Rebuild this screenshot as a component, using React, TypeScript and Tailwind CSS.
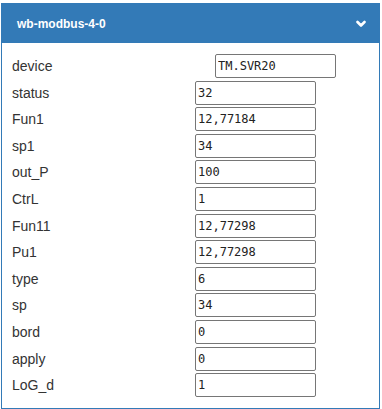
import { ChangeEvent, useState } from "react";

const initialRows: { name: string; value: string }[] = [
  { name: "device", value: "TM.SVR20" },
  { name: "status", value: "32" },
  { name: "Fun1", value: "12,77184" },
  { name: "sp1", value: "34" },
  { name: "out_P", value: "100" },
  { name: "CtrL", value: "1" },
  { name: "Fun11", value: "12,77298" },
  { name: "Pu1", value: "12,77298" },
  { name: "type", value: "6" },
  { name: "sp", value: "34" },
  { name: "bord", value: "0" },
  { name: "apply", value: "0" },
  { name: "LoG_d", value: "1" }
];

function Chevron() {
  return (
    <svg width="10" height="8" viewBox="0 0 10 8" className="text-white">
      <polyline points="1.5,2 5,5.5 8.5,2" fill="none" stroke="currentColor" strokeWidth="2.6" strokeLinecap="round"
                strokeLinejoin="round" />
    </svg>
  );
}

export default function App() {
  const [rows, setRows] = useState(initialRows);

  const onChange = (i: number) => (e: ChangeEvent<HTMLInputElement>) => {
    const next = rows.slice();
    next[i] = { ...next[i], value: e.target.value };
    setRows(next);
  };

  return (
    <div className="bg-white w-[382px] h-[409px] pt-[3px] pl-px font-['Liberation_Sans',Arial,sans-serif]">
      <div className="w-[379px] border border-[#337ab7] bg-white">
        <div className="h-[39px] bg-[#337ab7] flex items-center justify-between pl-[15px] pr-[13px]">
          <span className="text-white text-[12px] font-bold">wb-modbus-4-0</span>
          <Chevron />
        </div>
        <div className="pl-[10px] pt-[11px] pb-[11px] flex flex-col gap-[2.6px]">
          {rows.map((row, i) => (
            <div key={row.name} className="flex items-center h-[24px]">
              <label className="w-[183px] shrink-0 text-[14px] leading-[24px] text-[#333]">{row.name}</label>
              <input
                value={row.value}
                onChange={onChange(i)}
                className={
                  "w-[121px] h-[24px] border border-[#767676] rounded-[2px] px-[2px] text-[12px] text-[#222] bg-white font-['DejaVu_Sans_Mono',monospace] outline-none" +
                  (i === 0 ? " ml-[20px]" : "")
                }
              />
            </div>
          ))}
        </div>
      </div>
    </div>
  );
}
